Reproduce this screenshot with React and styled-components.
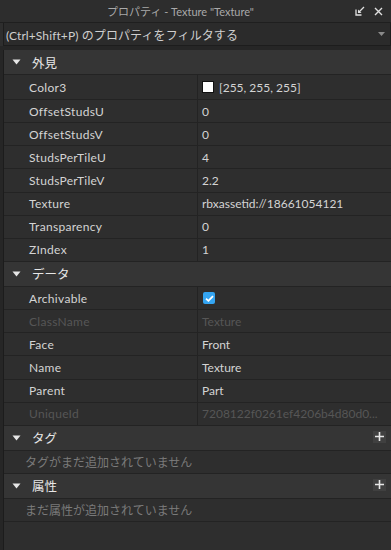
import React from "react";
import styled, { createGlobalStyle } from "styled-components";

const GlobalStyle = createGlobalStyle`
  html, body {
    margin: 0;
    padding: 0;
    background: #2e2e2e;
  }
  * {
    box-sizing: border-box;
  }
`;

const FONT = `"Lato", "Noto Sans CJK JP", sans-serif`;

const sections = [
  {
    title: "外見",
    rows: [
      { name: "Color3", value: "[255, 255, 255]", swatch: "#ffffff", tall: true },
      { name: "OffsetStudsU", value: "0" },
      { name: "OffsetStudsV", value: "0" },
      { name: "StudsPerTileU", value: "4" },
      { name: "StudsPerTileV", value: "2.2" },
      { name: "Texture", value: "rbxassetid://18661054121" },
      { name: "Transparency", value: "0" },
      { name: "ZIndex", value: "1" },
    ],
  },
  {
    title: "データ",
    rows: [
      { name: "Archivable", checked: true },
      { name: "ClassName", value: "Texture", disabled: true },
      { name: "Face", value: "Front" },
      { name: "Name", value: "Texture" },
      { name: "Parent", value: "Part" },
      { name: "UniqueId", value: "7208122f0261ef4206b4d80d0...", disabled: true },
    ],
  },
];

const extras = [
  { title: "タグ", empty: "タグがまだ追加されていません" },
  { title: "属性", empty: "まだ属性が追加されていません" },
];

function Arrow() {
  return (
    <svg width="9" height="6" viewBox="0 0 9 6">
      <path d="M0.5 0.5 L8.5 0.5 L4.5 5.5 Z" fill="#e6e6e6" />
    </svg>
  );
}

function Checkbox() {
  return (
    <CheckBox>
      <svg width="9" height="7" viewBox="0 0 9 7">
        <path d="M1 3.6 L3.4 5.8 L8 1.2" fill="none" stroke="#fff" strokeWidth="1.8" />
      </svg>
    </CheckBox>
  );
}

export default function App() {
  return (
    <>
      <GlobalStyle />
      <Panel>
        <TitleBar>
          <Title>プロパティ - Texture "Texture"</Title>
          <TitleIcons>
            <svg width="10" height="10" viewBox="0 0 10 10">
              <path d="M1 3.5 V9 H6.5" fill="none" stroke="#e0e0e0" strokeWidth="1.3" />
              <path d="M4 6 L9 1" fill="none" stroke="#e0e0e0" strokeWidth="1.3" />
              <path d="M3 3.5 V7 H6.5 Z" fill="#e0e0e0" />
            </svg>
            <svg width="9" height="9" viewBox="0 0 9 9">
              <path d="M1 1 L8 8 M8 1 L1 8" stroke="#e0e0e0" strokeWidth="1.4" />
            </svg>
          </TitleIcons>
        </TitleBar>
        <FilterBar>
          <FilterText>(Ctrl+Shift+P) のプロパティをフィルタする</FilterText>
          <svg width="7" height="4" viewBox="0 0 7 4">
            <path d="M0 0 H7 L3.5 4 Z" fill="#8a8a8a" />
          </svg>
        </FilterBar>
        <List>
          {sections.map((section) => (
            <Section key={section.title}>
              <SectionHeader>
                <Arrow />
                <SectionTitle>{section.title}</SectionTitle>
              </SectionHeader>
              {section.rows.map((row) => (
                <Row key={row.name} $tall={row.tall}>
                  <NameCell $disabled={row.disabled}>{row.name}</NameCell>
                  <ValueCell $disabled={row.disabled}>
                    {row.swatch && <Swatch style={{ background: row.swatch }} />}
                    {row.checked && <Checkbox />}
                    {row.value}
                  </ValueCell>
                </Row>
              ))}
            </Section>
          ))}
          {extras.map((extra) => (
            <Section key={extra.title}>
              <SectionHeader>
                <Arrow />
                <SectionTitle>{extra.title}</SectionTitle>
                <AddButton>
                  <svg width="9" height="9" viewBox="0 0 9 9">
                    <path d="M4.5 0 V9 M0 4.5 H9" stroke="#e8e8e8" strokeWidth="1.6" />
                  </svg>
                </AddButton>
              </SectionHeader>
              <EmptyRow>{extra.empty}</EmptyRow>
            </Section>
          ))}
        </List>
      </Panel>
    </>
  );
}

const Panel = styled.div`
  width: 391px;
  height: 550px;
  display: flex;
  flex-direction: column;
  background: #2e2e2e;
  font-family: ${FONT};
  font-size: 12px;
  color: #d2d2d2;
  overflow: hidden;
`;

const TitleBar = styled.div`
  height: 23px;
  flex: none;
  display: flex;
  align-items: center;
  justify-content: center;
  padding-right: 30px;
  position: relative;
  background: #2d2d2d;
  border-bottom: 1px solid #1f1f1f;
`;

const Title = styled.div`
  color: #a9a9a9;
  font-size: 11px;
`;

const TitleIcons = styled.div`
  position: absolute;
  right: 8px;
  top: 6px;
  display: flex;
  gap: 9px;
  align-items: center;
`;

const FilterBar = styled.div`
  height: 23px;
  flex: none;
  margin-left: 3px;
  display: flex;
  align-items: center;
  justify-content: space-between;
  padding: 0 5px 0 2px;
  background: #2b2b2b;
  border: 1px solid #1d1d1d;
  border-top: none;
`;

const FilterText = styled.span`
  color: #cfcfcf;
  font-size: 12px;
  letter-spacing: 0.1px;
`;

const List = styled.div`
  flex: 1;
  padding-top: 4px;
  padding-left: 3px;
  background: #262626;
  display: flex;
  flex-direction: column;
`;

const Section = styled.div`
  display: flex;
  flex-direction: column;
  background: #2e2e2e;
  border-left: 1px solid #1c1c1c;

  &:last-child {
    flex: 1;
  }
`;

const SectionHeader = styled.div`
  height: 25px;
  display: flex;
  align-items: center;
  gap: 11px;
  padding-left: 8px;
  background: #353535;
  border-bottom: 1px solid #232323;
  position: relative;
`;

const SectionTitle = styled.span`
  color: #e6e6e6;
  font-size: 12.5px;
`;

const AddButton = styled.div`
  position: absolute;
  right: 5px;
  top: 5px;
  width: 13px;
  height: 12px;
  display: flex;
  align-items: center;
  justify-content: center;
  background: #404040;
`;

const Row = styled.div`
  height: ${(p) => (p.$tall ? "25px" : "23.15px")};
  display: grid;
  grid-template-columns: 193px 1fr;
  border-bottom: 1px solid #232323;
`;

const NameCell = styled.div`
  display: flex;
  align-items: center;
  padding-left: 25px;
  letter-spacing: 0.3px;
  color: ${(p) => (p.$disabled ? "#565656" : "#d4d4d4")};
  white-space: nowrap;
  overflow: hidden;
`;

const ValueCell = styled.div`
  display: flex;
  align-items: center;
  gap: 5px;
  padding-left: 4px;
  border-left: 1px solid #232323;
  color: ${(p) => (p.$disabled ? "#565656" : "#d4d4d4")};
  white-space: nowrap;
  overflow: hidden;
`;

const Swatch = styled.span`
  width: 12px;
  height: 12px;
  border: 1px solid #111;
  flex: none;
`;

const CheckBox = styled.span`
  width: 12px;
  height: 12px;
  margin-left: 1px;
  border-radius: 2px;
  background: #34a5f2;
  display: flex;
  align-items: center;
  justify-content: center;
`;

const EmptyRow = styled.div`
  height: 23px;
  display: flex;
  align-items: center;
  padding-left: 21px;
  color: #7a7a7a;
  font-size: 12px;
  border-bottom: 1px solid #232323;
`;
